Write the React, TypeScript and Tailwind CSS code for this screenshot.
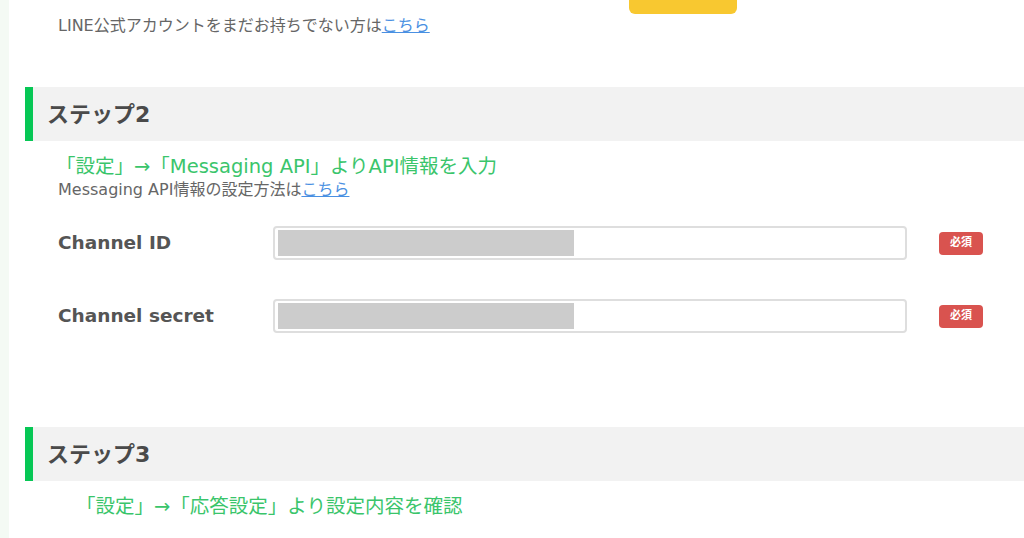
import React from "react";

const font = { fontFamily: '"DejaVu Sans", "Noto Sans CJK JP", sans-serif' };

function StepHeader({ label }: { label: string }) {
  return (
    <div className="flex h-[54px] items-stretch bg-[#f2f2f2]">
      <div className="w-[8px] bg-[#06c755]" />
      <div className="flex items-center pl-[14px] text-[22px] font-bold text-[#4a4a4a]">{label}</div>
    </div>
  );
}

function Field({ label, className }: { label: string; className?: string }) {
  return (
    <div className={"flex items-center " + (className ?? "")}>
      <div className="w-[248px] pl-[33px] text-[18.5px] font-bold text-[#555555]">{label}</div>
      <div className="flex h-[34px] w-[634px] items-center rounded-[4px] border-2 border-[#dedede] bg-white pl-[3px]">
        <div className="h-[26px] w-[296px] bg-[#cccccc]" />
      </div>
      <div className="ml-[32px] flex h-[23px] w-[44px] items-center justify-center rounded-[4px] bg-[#d9534f] text-[11px] font-bold text-white">
        必須
      </div>
    </div>
  );
}

export default function App() {
  return (
    <div className="flex h-[538px] w-[1024px] overflow-hidden bg-white" style={font}>
      <div className="w-[9px] shrink-0 bg-[#f4faf4]" />
      <div className="flex-1 pl-[16px]">
        <div className="h-[14px]">
          <div className="ml-[604px] h-[14px] w-[108px] rounded-b-[6px] bg-[#f8c830]" />
        </div>
        <div className="mt-[2px] pl-[33px] text-[16px] leading-[20px] text-[#666666]">
          LINE公式アカウントをまだお持ちでない方は
          <span className="text-[#4a90e2] underline">こちら</span>
        </div>
        <div className="mt-[51px]">
          <StepHeader label="ステップ2" />
        </div>
        <div className="mt-[14px] pl-[31px] text-[19.5px] leading-[24px] text-[#3ac56b]">
          「設定」→「Messaging API」よりAPI情報を入力
        </div>
        <div className="mt-[1px] pl-[33px] text-[16px] leading-[20px] text-[#666666]">
          Messaging API情報の設定方法は
          <span className="text-[#4a90e2] underline">こちら</span>
        </div>
        <Field label="Channel ID" className="mt-[26px]" />
        <Field label="Channel secret" className="mt-[39px]" />
        <div className="mt-[94px]">
          <StepHeader label="ステップ3" />
        </div>
        <div className="mt-[14px] pl-[51px] text-[19.5px] leading-[24px] text-[#3ac56b]">
          「設定」→「応答設定」より設定内容を確認
        </div>
      </div>
    </div>
  );
}
